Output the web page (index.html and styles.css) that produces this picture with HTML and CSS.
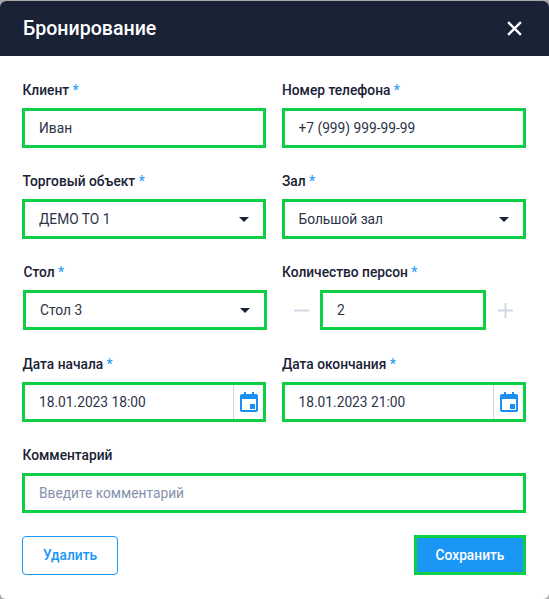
FILE: index.html
```html
<!DOCTYPE html>
<html lang="ru">
<head>
<meta charset="utf-8">
<title>Бронирование</title>
<link rel="stylesheet" href="styles.css">
</head>
<body>
<div class="modal">
  <header class="head">
    <h1 class="title">Бронирование</h1>
    <svg class="close" viewBox="0 0 16 16" aria-hidden="true"><path d="M2 2L14 14M14 2L2 14"/></svg>
  </header>
  <form class="form">
    <div class="grid">
      <div class="field">
        <div class="label">Клиент <span class="req">*</span></div>
        <div class="box">Иван</div>
      </div>
      <div class="field">
        <div class="label right">Номер телефона <span class="req">*</span></div>
        <div class="box right">+7 (999) 999-99-99</div>
      </div>
      <div class="field">
        <div class="label">Торговый объект <span class="req">*</span></div>
        <div class="box select">ДЕМО ТО 1<span class="caret"></span></div>
      </div>
      <div class="field">
        <div class="label right">Зал <span class="req">*</span></div>
        <div class="box select right">Большой зал<span class="caret"></span></div>
      </div>
      <div class="field shifted">
        <div class="label">Стол <span class="req">*</span></div>
        <div class="box select">Стол 3<span class="caret"></span></div>
      </div>
      <div class="field">
        <div class="label right">Количество персон <span class="req">*</span></div>
        <div class="stepper">
          <svg class="step" viewBox="0 0 16 16" aria-hidden="true"><path d="M0 8H16"/></svg>
          <div class="box grow">2</div>
          <svg class="step" viewBox="0 0 16 16" aria-hidden="true"><path d="M0 8H16M8 0V16"/></svg>
        </div>
      </div>
      <div class="field">
        <div class="label">Дата начала <span class="req">*</span></div>
        <div class="box date"><span class="date-text">18.01.2023 18:00</span><span class="date-btn"><svg class="cal" viewBox="0 0 18 20" aria-hidden="true"><path fill-rule="evenodd" d="M4 0h2v2h6V0h2v2h2a2 2 0 0 1 2 2v14a2 2 0 0 1-2 2H2a2 2 0 0 1-2-2V4a2 2 0 0 1 2-2h2zM2 7v11h14V7z"/><rect x="10" y="12" width="5" height="5"/></svg></span></div>
      </div>
      <div class="field">
        <div class="label right">Дата окончания <span class="req">*</span></div>
        <div class="box date right"><span class="date-text">18.01.2023 21:00</span><span class="date-btn"><svg class="cal" viewBox="0 0 18 20" aria-hidden="true"><path fill-rule="evenodd" d="M4 0h2v2h6V0h2v2h2a2 2 0 0 1 2 2v14a2 2 0 0 1-2 2H2a2 2 0 0 1-2-2V4a2 2 0 0 1 2-2h2zM2 7v11h14V7z"/><rect x="10" y="12" width="5" height="5"/></svg></span></div>
      </div>
      <div class="field wide">
        <div class="label">Комментарий</div>
        <div class="box placeholder">Введите комментарий</div>
      </div>
    </div>
    <div class="actions">
      <button type="button" class="btn ghost">Удалить</button>
      <button type="button" class="btn primary">Сохранить</button>
    </div>
  </form>
</div>
</body>
</html>
```
FILE: styles.css
```css
* { box-sizing: border-box; }
html, body { margin: 0; height: 100%; }
body {
  background: #a9a9a9;
  padding-top: 1px;
  font-family: Roboto, "Liberation Sans", sans-serif;
  color: #1a2236;
  overflow: hidden;
}
.modal {
  background: #fff;
  height: 598px;
  border-radius: 6px;
  overflow: hidden;
}
.head {
  background: #1a2236;
  height: 55px;
  padding: 0 26px 0 23px;
  display: flex;
  align-items: center;
  justify-content: space-between;
}
.title {
  margin: 0;
  font-size: 19.6px;
  font-weight: 500;
  color: #fff;
}
.close {
  width: 17px;
  height: 17px;
  fill: none;
  stroke: #fff;
  stroke-width: 2.2;
}
.form { padding: 24px 23px 0 22px; }
.grid {
  display: grid;
  grid-template-columns: 244px 244px;
  column-gap: 16px;
  row-gap: 23.2px;
}
.field { min-width: 0; }
.shifted { transform: translateX(1px); }
.wide { grid-column: 1 / -1; }
.label {
  font-size: 13.75px;
  font-weight: 500;
  line-height: 20px;
  height: 20px;
  margin-bottom: 8px;
  padding-left: 0.5px;
}
.label.right { padding-left: 0; }
.req { color: #2f9df4; }
.box {
  height: 40px;
  border: 3px solid #0ccf45;
  background: #fff;
  display: flex;
  align-items: center;
  padding-left: 14px;
  font-size: 13.75px;
  color: #2c3347;
}
.box.right { padding-left: 13.5px; }
.select {
  justify-content: space-between;
  padding-right: 14px;
}
.caret {
  width: 0;
  height: 0;
  border-left: 5px solid transparent;
  border-right: 5px solid transparent;
  border-top: 5px solid #1a2236;
}
.stepper {
  display: flex;
  align-items: center;
  gap: 11px;
}
.step {
  width: 15px;
  height: 15px;
  fill: none;
  stroke: #cfd6e2;
  stroke-width: 2;
  flex: none;
}
.stepper .step:first-child { margin-left: 12px; }
.stepper .step:last-child { margin-left: 1px; margin-right: 13px; }
.grow { flex: 1; min-width: 0; padding-left: 14px; }
.date { padding: 0 0 0 14px; }
.date-text { flex: 1; }
.date-btn {
  width: 30px;
  height: 100%;
  border-left: 1px solid #cfd6e2;
  display: flex;
  align-items: center;
  justify-content: center;
}
.cal {
  width: 18px;
  height: 20px;
  fill: #1a8ef5;
}
.placeholder { color: #8592ad; }
.actions {
  display: flex;
  justify-content: space-between;
  align-items: flex-end;
  margin-top: 22px;
}
.btn {
  font-family: inherit;
  font-size: 13.75px;
  font-weight: 500;
  cursor: pointer;
}
.ghost {
  width: 96px;
  height: 39px;
  background: #fff;
  color: #1a96f5;
  border: 1px solid #1a96f5;
  border-radius: 4px;
}
.primary {
  width: 112px;
  height: 40px;
  background: #1a96f5;
  color: #fff;
  border: 3px solid #0ccf45;
}
```
